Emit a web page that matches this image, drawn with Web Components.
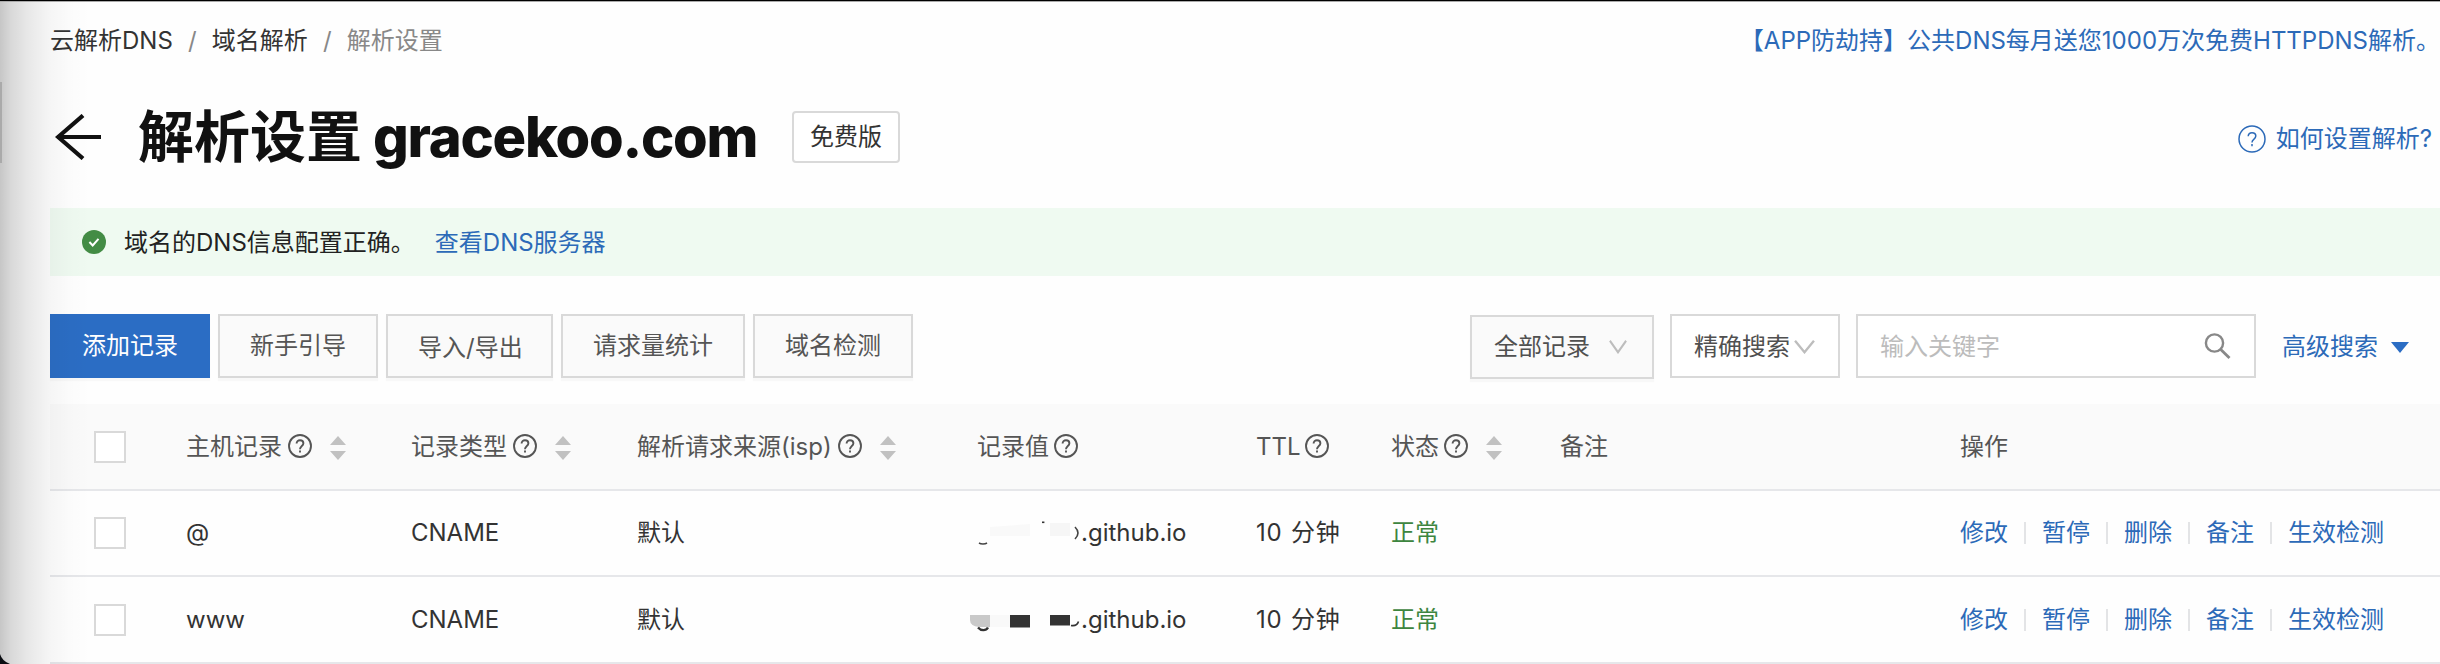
<!DOCTYPE html>
<html lang="zh-CN">
<head>
<meta charset="utf-8">
<title>解析设置</title>
<style>
html,body{margin:0;padding:0}
body{width:2440px;height:664px;overflow:hidden;background:#fff;font-family:Inter,"Noto Sans CJK SC",sans-serif;font-size:24px;line-height:36px;color:#333}
</style>
</head>
<body>
<dns-page></dns-page>
<script>
const define = (name, html, setup) => {
  const t = document.createElement('template');
  t.innerHTML = html;
  customElements.define(name, class extends HTMLElement {
    constructor() {
      super();
      this.attachShadow({mode: 'open'}).appendChild(t.content.cloneNode(true));
    }
    connectedCallback() { if (setup) setup(this, this.shadowRoot); }
  });
};

define('help-icon', `<style>:host{display:block;width:24px;height:24px;flex:none}svg{display:block;width:100%;height:100%}</style>
<svg viewBox="0 0 24 24" fill="none" stroke="currentColor" stroke-width="1.9"><circle cx="12" cy="12" r="11"/><path d="M8.6 9.6C8.6 7.4 10 6.2 12 6.2s3.4 1.2 3.4 3.1c0 1.5-.8 2.2-1.8 3-.9.8-1.6 1.3-1.6 2.9"/><path d="M12 16.6v2"/></svg>`);

define('sort-icon', `<style>:host{display:block;width:16px;height:24px;flex:none}svg{display:block}</style>
<svg width="16" height="24" viewBox="0 0 16 24" fill="#c1c1c1"><path d="M8 0l8 9H0zM0 15h16l-8 9z"/></svg>`);

define('crumb-trail', `<style>:host{display:flex;color:#333}.s{width:39px;text-align:center;color:#888}.c{color:#888}</style>
<span>云解析DNS</span><span class="s">/</span><span>域名解析</span><span class="s">/</span><span class="c">解析设置</span>`);

define('page-title', `<style>:host{display:flex;align-items:center;height:68px}
svg{display:block;margin-left:5px;flex:none}
h1{margin:0 0 0 37px;font-size:56px;line-height:68px;font-weight:700;color:#111;white-space:nowrap;display:flex}
.d{margin-left:11px;width:387px;font-weight:850;letter-spacing:-1.25px}
.tag{box-sizing:border-box;height:52px;width:108px;margin-left:32px;border:2px solid #d9d9d9;border-radius:4px;line-height:48px;text-align:center;background:#fff}
.help{margin-left:auto;display:flex;align-items:center;color:#2c6ab8;padding:3px 8px 0 0;gap:10px}</style>
<svg width="46" height="46" viewBox="0 0 46 46" fill="none" stroke="#111" stroke-width="4.2"><path d="M3 23H46M28 1.5L3.2 23 28 44.5"/></svg>
<h1><span>解析设置</span><span class="d">gracekoo.com</span></h1><span class="tag">免费版</span>
<span class="help"><svg width="28" height="28" viewBox="0 0 28 28" fill="none" stroke="currentColor" stroke-width="1.5"><circle cx="14" cy="14" r="13"/><path d="M10.2 11.3c0-2.3 1.6-3.6 3.8-3.6s3.8 1.3 3.8 3.4c0 1.6-.9 2.4-2 3.2-1.1.9-1.8 1.5-1.8 3.2M14 19v2.2"/></svg><span>如何设置解析?</span></span>`);

define('notice-bar', `<style>:host{display:flex;align-items:center;height:68px;background:#effaf1;padding-left:32px;color:#222}svg{flex:none;margin-right:18px}span{padding-top:2px}a{color:#2c6ab8;margin-left:20px;padding-top:2px}</style>
<svg width="24" height="24" viewBox="0 0 24 24"><circle cx="12" cy="12" r="12" fill="#438c45"/><path d="M7.4 12l3.3 3.5 5.8-6.6" fill="none" stroke="#fff" stroke-width="2"/></svg><span><slot></slot></span><a>查看DNS服务器</a>`);

define('tool-button', `<style>:host{display:block;box-sizing:border-box;height:64px;border:2px solid #d9d9d9;background:#fafafa;color:#555;padding:0 30px;line-height:60px;box-shadow:0 3px 1px rgba(0,0,0,.025);white-space:nowrap}
:host([primary]){background:#2b6dc4;border-color:#2b6dc4;color:#fff}</style><slot></slot>`);

define('select-box', `<style>:host{display:flex;box-sizing:border-box;height:64px;border:2px solid #d9d9d9;padding-left:22px;align-items:center;color:#505050;background:#fff}svg{display:block;flex:none}</style>
<slot></slot><svg width="20" height="14" viewBox="0 0 20 14" preserveAspectRatio="none" fill="none" stroke="#bdbdbd" stroke-width="2.200"><path d="M1 .8l9 11.500 9-11.500"/></svg>`,
(el, r) => { r.querySelector('svg').style.marginLeft = el.getAttribute('gap') + 'px'; r.querySelector('svg').setAttribute('width', el.getAttribute('arrow')); });

define('search-box', `<style>:host{display:flex;box-sizing:border-box;width:400px;height:64px;border:2px solid #d9d9d9;padding:2px 23px 0 22px;align-items:center;justify-content:space-between;color:#bcbcbc;background:#fff}svg{margin-top:-3px}</style>
<slot></slot><svg width="27" height="26" viewBox="0 0 27 26" fill="none" stroke="#888" stroke-width="2.4"><circle cx="10.5" cy="10" r="8.6"/><path d="M16.5 16.2l9 8.8" stroke-width="2.8"/></svg>`);

define('tool-bar', `<style>:host{display:flex;align-items:flex-start;gap:8px;height:64px}
.r{margin-left:auto;display:flex;gap:16px;align-items:flex-start;padding-right:31px}
.all{width:184px;margin-top:1px;background:#fafafa;box-shadow:0 3px 1px rgba(0,0,0,.025)}.exact{width:170px;padding-top:2px}
.adv{display:flex;align-items:center;height:66px;color:#2c6ab8;margin-left:10px;gap:13px}.low{line-height:63px}</style>
<tool-button primary>添加记录</tool-button><tool-button>新手引导</tool-button><tool-button class="low" style="width:167px">导入/导出</tool-button><tool-button>请求量统计</tool-button><tool-button>域名检测</tool-button>
<div class="r"><select-box class="all" gap="19" arrow="18">全部记录</select-box><select-box class="exact" gap="4" arrow="21">精确搜索</select-box><search-box>输入关键字</search-box>
<span class="adv">高级搜索<svg width="18" height="11" viewBox="0 0 18 11" fill="#2b6dc4"><path d="M0 0h18L9 11z"/></svg></span></div>`);

define('check-box', `<style>:host{display:block;box-sizing:border-box;width:32px;height:32px;border:2px solid #d9d9d9;background:#fff}</style>`);

const grid = `display:grid;grid-template-columns:44px 92px 225px 226px 340px 279px 135px 169px 400px 1fr;align-items:center;box-sizing:border-box;border-bottom:2px solid #e6e7ea;white-space:nowrap`;

define('table-head', `<style>:host{${grid};height:87px;background:#fafafa;color:#555}.c{display:flex;align-items:center}help-icon{margin:-1px 0 0 6px}sort-icon{margin:3px 0 0 18px}.t help-icon{margin-left:4px}</style>
<i></i><check-box></check-box>
<div class="c">主机记录<help-icon></help-icon><sort-icon></sort-icon></div>
<div class="c">记录类型<help-icon></help-icon><sort-icon></sort-icon></div>
<div class="c">解析请求来源(isp)<help-icon></help-icon><sort-icon></sort-icon></div>
<div class="c">记录值<help-icon style="margin-left:5px"></help-icon></div>
<div class="c t">TTL<help-icon></help-icon></div>
<div class="c">状态<help-icon style="margin-left:5px"></help-icon><sort-icon></sort-icon></div>
<div>备注</div><div>操作</div>`);

define('row-actions', `<style>:host{display:flex;align-items:center;color:#2c6ab8}i{width:2px;height:22px;background:#e3e4e6;margin:0 16px}</style>
<a>修改</a><i></i><a>暂停</a><i></i><a>删除</a><i></i><a>备注</a><i></i><a>生效检测</a>`);

define('record-row', `<style>:host{${grid};height:86px}.ok{color:#3d853f}.v{display:flex;align-items:center;margin-left:-7px}.v span{margin-left:1px}.ttl{word-spacing:1px;letter-spacing:.8px}::slotted(svg){display:block;flex:none}</style>
<i></i><check-box></check-box><slot name="host"></slot><div>CNAME</div><div>默认</div>
<div class="v"><slot name="mask"></slot><span>.github.io</span></div>
<div class="ttl">10 分钟</div><div class="ok">正常</div><div></div><row-actions></row-actions>`);

define('dns-page', `<style>
:host{display:block;position:relative;width:2440px;height:664px;overflow:hidden;background:#fefefe}
main{display:flex;flex-direction:column;padding:23px 0 0 50px}
.top{display:flex;justify-content:space-between;height:36px}
.promo{color:#2c6ab8;white-space:nowrap}
page-title{margin-top:44px}notice-bar{margin-top:37px}tool-bar{margin-top:38px}table-head{margin-top:26px}
.edge{position:absolute;left:0;top:0;width:90px;height:664px;background:linear-gradient(90deg,rgba(0,0,0,.22),rgba(0,0,0,.15) 12%,rgba(0,0,0,.09) 30%,rgba(0,0,0,.035) 55%,rgba(0,0,0,.01) 78%,transparent)}
.thumb{position:absolute;left:0;top:82px;width:2px;height:81px;background:#aaa}
.line{position:absolute;left:0;top:0;width:2440px;height:1px;background:#000;border-bottom:1px solid #aaa}
.corner{position:absolute;left:0;bottom:0}
</style>
<main>
<div class="top"><crumb-trail></crumb-trail><span class="promo">【APP防劫持】公共DNS每月送您1000万次免费HTTPDNS解析。</span></div>
<page-title></page-title>
<notice-bar>域名的DNS信息配置正确。</notice-bar>
<tool-bar></tool-bar>
<table-head></table-head>
<record-row><span slot="host">@</span>
<svg slot="mask" width="110" height="36" viewBox="0 0 110 36"><path d="M20 12l40-3v12H20z" fill="#f9f9f9"/><rect x="80" y="8" width="20" height="13" fill="#f6f6f6"/><path d="M9 28c2 1.300 6 1.300 8 0" fill="none" stroke="#444" stroke-width="1.500"/><rect x="72" y="6.500" width="2.400" height="1.600" fill="#333"/><path d="M105 12q6 6 0 12" fill="none" stroke="#444" stroke-width="1.600"/></svg></record-row>
<record-row style="height:87px"><span slot="host">www</span>
<svg slot="mask" width="110" height="36" viewBox="0 0 110 36"><path d="M0 13h20v12H9Q0 24 0 18z" fill="#c9c9c9"/><path d="M8 25.500c3 3.500 8 3.500 10 0" fill="none" stroke="#333" stroke-width="2.400"/><rect x="20" y="13" width="20" height="12" fill="#f9f9f9"/><rect x="40" y="13" width="20" height="12.500" fill="#333"/><rect x="80" y="13" width="20" height="10.500" fill="#333"/><path d="M101 23.500q6 1 7.500-4" fill="none" stroke="#333" stroke-width="1.600"/></svg></record-row>
</main>
<div class="edge"></div><div class="thumb"></div><div class="line"></div>
<svg class="corner" width="12" height="12" viewBox="0 0 12 12"><path d="M0 2Q2 9 10 12H0z" fill="#0b0d12"/></svg>`);
</script>
</body>
</html>
